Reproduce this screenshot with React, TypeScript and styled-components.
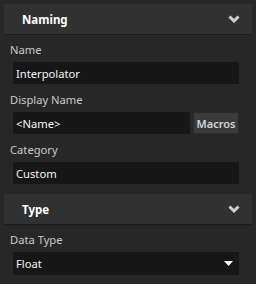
import styled, { createGlobalStyle } from "styled-components";

const Global = createGlobalStyle`
    body {
        margin: 0;
        background: #272727;
        font-family: "Noto Sans", "Open Sans", sans-serif;
    }
`

const Panel = styled.div`
    width: 256px;
    height: 284px;
    padding: 4px 0 0;
    box-sizing: border-box;
    background: #272727;
`

const Header = styled.div`
    margin: 0 4px;
    height: 30px;
    border-bottom: 1px solid #1c1c1c;
    background: #313131;
    display: flex;
    align-items: center;
    justify-content: space-between;
    padding: 0 12px 0 18px;
    color: #ffffff;
    font-size: 11.5px;
    font-weight: 700;
`

const Body = styled.div`
    padding: 5px 17px 10px 10px;
    display: flex;
    flex-direction: column;
`

const Label = styled.div<{ $first?: boolean }>`
    margin-top: ${(p) => (p.$first ? "0" : "6px")};
    height: 20px;
    line-height: 20px;
    margin-bottom: 2px;
    color: #c9c9c9;
    font-size: 11.2px;
`

const Row = styled.div`
    display: flex;
    gap: 3px;
    margin-left: 3px;
`

const Input = styled.div<{ $h?: number }>`
    flex: 1;
    height: ${(p) => p.$h ?? 22}px;
    background: #171717;
    color: #f4f4f4;
    font-size: 11.2px;
    display: flex;
    align-items: center;
    justify-content: space-between;
    padding: 0 6px 0 3px;
`

const Button = styled.div`
    width: 44px;
    height: 20px;
    border: 1px solid #2b2b2b;
    border-radius: 2px;
    background: #3b3b3b;
    color: #cfd6dc;
    font-size: 11px;
    font-weight: 600;
    display: flex;
    align-items: center;
    justify-content: center;
`

const Chevron = () => (
    <svg width="12" height="8" viewBox="0 0 12 8">
        <polyline points="1.5,1.5 6,6 10.5,1.5" fill="none" stroke="#cfcfcf" strokeWidth="3" />
    </svg>
)

const Caret = () => (
    <svg width="9" height="5" viewBox="0 0 9 5">
        <polygon points="0,0 9,0 4.5,5" fill="#ffffff" />
    </svg>
)

function Section({ title, children }: { title: string; children: React.ReactNode }) {
    return (
        <>
            <Header>
                {title}
                <Chevron />
            </Header>
            <Body>{children}</Body>
        </>
    )
}

export default function App() {
    return (
        <Panel>
            <Global />
            <Section title="Naming">
                <Label $first>Name</Label>
                <Row><Input>Interpolator</Input></Row>
                <Label>Display Name</Label>
                <Row>
                    <Input>&lt;Name&gt;</Input>
                    <Button>Macros</Button>
                </Row>
                <Label>Category</Label>
                <Row><Input>Custom</Input></Row>
            </Section>
            <Section title="Type">
                <Label $first>Data Type</Label>
                <Row>
                    <Input $h={23}>
                        Float
                        <Caret />
                    </Input>
                </Row>
            </Section>
        </Panel>
    )
}
